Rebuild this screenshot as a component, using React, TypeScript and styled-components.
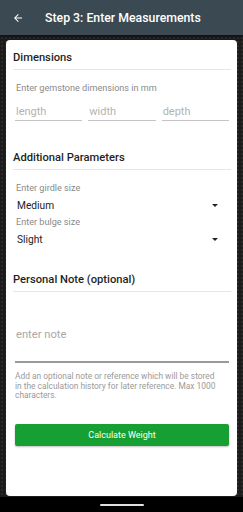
import React, { FC } from "react";
import styled, { createGlobalStyle } from "styled-components";

const GlobalStyle = createGlobalStyle`
  html, body {
    margin: 0;
    padding: 0;
    background: #000;
  }
  body {
    font-family: Roboto, "Noto Sans", sans-serif;
    -webkit-font-smoothing: antialiased;
  }
`;

const Screen = styled.div`
  width: 243px;
  height: 512px;
  display: flex;
  flex-direction: column;
  overflow: hidden;
  background-color: #1b1b1b;
  background-image: radial-gradient(circle at 2px 2px, #2a2a2a 1px, transparent 1.4px);
  background-size: 4px 4px;
`;

const AppBar = styled.div`
  height: 35px;
  flex: none;
  display: flex;
  align-items: center;
  background: #3b4a52;
  color: #fff;
  box-shadow: 0 1px 3px rgba(0, 0, 0, 0.5);
`;

const BackButton = styled.div`
  width: 45px;
  display: flex;
  justify-content: center;
  padding-right: 10px;
  box-sizing: border-box;
`;

const BarTitle = styled.h1`
  margin: 0;
  font-size: 12.3px;
  font-weight: 500;
`;

const Body = styled.div`
  flex: 1;
  padding: 5px 6px 1px;
  display: flex;
  flex-direction: column;
`;

const Card = styled.div`
  flex: 1;
  background: #fff;
  border-radius: 4px;
  padding: 11px 6px 0 7px;
  display: flex;
  flex-direction: column;
`;

const SectionTitle = styled.h2`
  margin: 0;
  font-size: 11.2px;
  font-weight: 500;
  line-height: 14px;
  color: #1f1f1f;
  padding-bottom: 4px;
  border-bottom: 1px solid #e6e6e6;
`;

const Section = styled.div<{ gap: number }>`
  margin-bottom: ${(p) => p.gap}px;
`;

const Hint = styled.div<{ first?: boolean }>`
  font-size: 9.1px;
  color: #8a8a8a;
  padding-left: 3px;
  line-height: 11px;
  margin-top: ${(p) => (p.first ? 13 : 0)}px;
`;

const Inputs = styled.div`
  display: flex;
  gap: 6px;
  padding: 11px 2px 0 2px;
`;

const Field = styled.div`
  flex: 1;
  font-size: 11px;
  color: #b3b3b3;
  padding: 0 1px 2px;
  border-bottom: 1px solid #c4c4c4;
  line-height: 13px;
`;

const SelectRow = styled.div`
  display: flex;
  justify-content: space-between;
  align-items: center;
  font-size: 10.2px;
  color: #222;
  padding: 4.5px 13px 4.5px 4px;
  line-height: 14px;
`;

const Caret = styled.span`
  width: 0;
  height: 0;
  border-left: 3px solid transparent;
  border-right: 3px solid transparent;
  border-top: 3px solid #222;
`;

const NoteField = styled.div`
  margin: 36px 2px 0;
  font-size: 11.2px;
  color: #a8a8a8;
  padding: 0 1px 19px;
  border-bottom: 2px solid #9a9a9a;
  line-height: 14px;
`;

const NoteHelp = styled.p`
  margin: 9px 14px 0 2px;
  font-size: 8.4px;
  color: #9a9a9a;
  line-height: 9.7px;
`;

const CalcButton = styled.button`
  margin: 23px 2px 0;
  height: 22px;
  border: none;
  border-radius: 2px;
  background: #16a034;
  color: #fff;
  font-family: Roboto, sans-serif;
  font-size: 9px;
  box-shadow: 0 1px 2px rgba(0, 0, 0, 0.25);
`;

const NavBar = styled.div`
  height: 15px;
  flex: none;
  background: #000;
  display: flex;
  align-items: center;
  justify-content: center;
`;

const HomeIndicator = styled.div`
  width: 44px;
  height: 2px;
  border-radius: 1px;
  background: #e0e0e0;
`;

const App: FC = () => {
  return (
    <>
      <GlobalStyle />
      <Screen>
        <AppBar>
          <BackButton>
            <svg width="12" height="12" viewBox="0 0 24 24" fill="#fff">
              <path d="M20 11H7.83l5.59-5.59L12 4l-8 8 8 8 1.41-1.41L7.83 13H20v-2z" />
            </svg>
          </BackButton>
          <BarTitle>Step 3: Enter Measurements</BarTitle>
        </AppBar>
        <Body>
          <Card>
            <Section gap={30}>
              <SectionTitle>Dimensions</SectionTitle>
              <Hint first>Enter gemstone dimensions in mm</Hint>
              <Inputs>
                <Field>length</Field>
                <Field>width</Field>
                <Field>depth</Field>
              </Inputs>
            </Section>
            <Section gap={22}>
              <SectionTitle>Additional Parameters</SectionTitle>
              <Hint first>Enter girdle size</Hint>
              <SelectRow>
                Medium
                <Caret />
              </SelectRow>
              <Hint>Enter bulge size</Hint>
              <SelectRow>
                Slight
                <Caret />
              </SelectRow>
            </Section>
            <Section gap={0}>
              <SectionTitle>Personal Note (optional)</SectionTitle>
              <NoteField>enter note</NoteField>
              <NoteHelp>
                Add an optional note or reference which will be stored in the calculation
                history for later reference. Max 1000 characters.
              </NoteHelp>
            </Section>
            <CalcButton>Calculate Weight</CalcButton>
          </Card>
        </Body>
        <NavBar>
          <HomeIndicator />
        </NavBar>
      </Screen>
    </>
  );
};

export default App;
